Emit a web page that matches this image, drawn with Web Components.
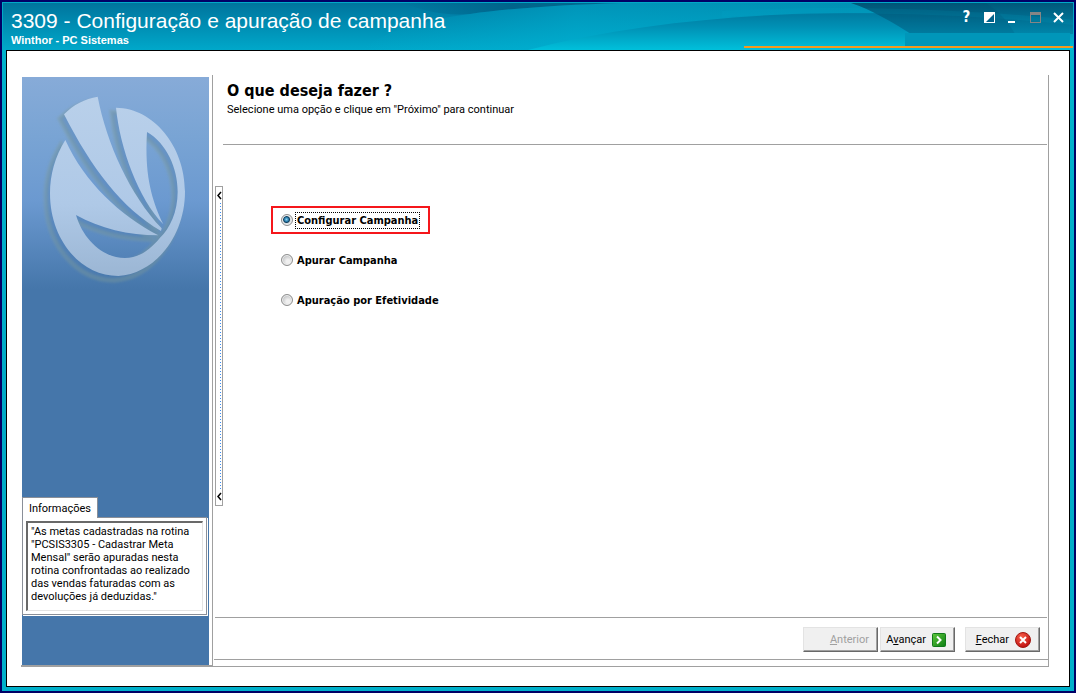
<!DOCTYPE html>
<html lang="pt-BR">
<head>
<meta charset="UTF-8">
<meta name="viewport" content="width=device-width, initial-scale=1">
<title>3309 - Configuração e apuração de campanha</title>
<style>
  body {
    margin: 0;
    font-family: Roboto, "DejaVu Sans Condensed", sans-serif;
    font-size: 11px;
    color: #000;
  }
</style>
</head>
<body>
<app-window>
  <span slot="title">3309 - Configuração e apuração de campanha</span>
  <span slot="subtitle">Winthor - PC Sistemas</span>
  <wizard-frame>
    <wizard-sidebar slot="sidebar">
      <brand-logo></brand-logo>
      <info-panel slot="info"></info-panel>
    </wizard-sidebar>
    <panel-splitter slot="splitter"></panel-splitter>
    <span slot="heading">O que deseja fazer ?</span>
    <span slot="hint">Selecione uma opção e clique em "Próximo" para continuar</span>
    <campaign-options></campaign-options>
    <wizard-actions slot="actions"></wizard-actions>
  </wizard-frame>
</app-window>

<script>
class AppWindow extends HTMLElement {
  constructor() {
    super();
    this.attachShadow({ mode: "open" });
  }

  connectedCallback() {
    this.shadowRoot.innerHTML = `
      <style>
        :host {
          display: flex;
          flex-direction: column;
          box-sizing: border-box;
          min-height: 100vh;
          border: 2px solid #000066;
          background: linear-gradient(#00b4ce, #00a9c6 60%, #00b0cb);
        }

        header {
          position: relative;
          display: flex;
          justify-content: space-between;
          height: 48px;
          font-family: "Liberation Sans", Arial, sans-serif;
          color: #fff;
        }

        .backdrop {
          position: absolute;
          inset: 0;
          width: 100%;
          height: 100%;
        }

        .titles {
          position: relative;
          padding: 7px 0 0 9px;
        }

        h1 {
          margin: 0;
          font-size: 21px;
          line-height: 24px;
          font-weight: normal;
        }

        p {
          margin: 0;
          font-size: 11px;
          line-height: 14px;
          font-weight: bold;
        }

        nav {
          position: relative;
          display: flex;
          height: 30px;
          padding-right: 4px;
        }

        nav button {
          display: flex;
          align-items: center;
          justify-content: center;
          width: 23px;
          padding: 0;
          border: none;
          background: none;
          color: #fff;
          font: bold 15px/30px "DejaVu Sans Condensed", sans-serif;
        }

        main {
          display: flex;
          flex: 1;
          margin: 0 4px 4px;
          padding: 24px 20px 19px 14px;
          border: 1px solid #000;
          background: #fff;
        }

        ::slotted(wizard-frame) {
          flex: 1;
        }
      </style>

      <header>
        <svg class="backdrop" viewBox="0 0 1072 48" preserveAspectRatio="none" aria-hidden="true">
          <defs>
            <linearGradient id="base" x1="0" y1="0" x2="0" y2="1">
              <stop offset="0" stop-color="#00739c"/>
              <stop offset="1" stop-color="#00a8ca"/>
            </linearGradient>
            <linearGradient id="shade" x1="0" y1="0" x2="1" y2="0">
              <stop offset="0" stop-color="#006288" stop-opacity="0"/>
              <stop offset=".5" stop-color="#006288" stop-opacity=".9"/>
              <stop offset="1" stop-color="#006288" stop-opacity=".6"/>
            </linearGradient>
            <linearGradient id="wave" x1="0" y1="0" x2="1" y2="0">
              <stop offset="0" stop-color="#00b4d4" stop-opacity="0"/>
              <stop offset=".3" stop-color="#00b4d4" stop-opacity=".5"/>
              <stop offset="1" stop-color="#00a4c4" stop-opacity=".5"/>
            </linearGradient>
            <linearGradient id="low" x1="0" y1="0" x2="0" y2="1">
              <stop offset="0" stop-color="#007aa0"/>
              <stop offset=".4" stop-color="#0092b6"/>
              <stop offset="1" stop-color="#00c0db"/>
            </linearGradient>
            <linearGradient id="dark" x1="0" y1="0" x2="0" y2="1">
              <stop offset="0" stop-color="#00587a"/>
              <stop offset="1" stop-color="#0086aa"/>
            </linearGradient>
          </defs>
          <rect width="1072" height="48" fill="url(#base)"/>
          <path d="M400 1H620C560 3 510 6 468 12C440 14 420 8 400 1Z" fill="url(#shade)"/>
          <path d="M360 48C380 30 420 18 468 12C510 6 560 3 620 1H1072V48Z" fill="url(#wave)"/>
          <path d="M526 48C610 26 700 16 790 12C900 9 1000 13 1072 22V48Z" fill="url(#low)"/>
          <path d="M849 1C870 8 890 20 909 32H1072V1Z" fill="url(#dark)"/>
          <path d="M720 9C820 3 960 6 1072 18V23C960 11 850 9 720 15Z" fill="#00a9c8" opacity=".15"/>
          <path d="M984 1C998 10 1008 22 1013 32H909C890 20 870 8 849 1Z" fill="#004463" opacity=".15"/>
          <rect x="903" y="31" width="165" height="14" fill="#0096b9"/>
          <rect x="742" y="44" width="330" height="2" fill="#f39a1e"/>
          <path d="M0 0H1072V1H0Z" fill="#00a9c8"/>
          <path d="M0 0H1V48H0ZM1071 0H1072V48H1071Z" fill="#00a9c8"/>
        </svg>
        <div class="titles">
          <h1><slot name="title"></slot></h1>
          <p><slot name="subtitle"></slot></p>
        </div>
        <nav>
          <button aria-label="Ajuda">?</button>
          <button aria-label="Alternar tamanho">
            <svg width="11" height="11"><path d="M0 0H11V11H0Z" fill="#fff"/><path d="M10 2V10H2Z" fill="#00618a"/></svg>
          </button>
          <button aria-label="Minimizar">
            <svg width="11" height="11"><path d="M1 9H8V11H1Z" fill="#fff"/></svg>
          </button>
          <button aria-label="Maximizar" disabled>
            <svg width="11" height="11"><path d="M0 0H11V11H0ZM1 3V10H10V3Z" fill="#858585" fill-rule="evenodd"/></svg>
          </button>
          <button aria-label="Fechar janela">
            <svg width="11" height="11"><path d="M1 1L10 10M10 1L1 10" stroke="#fff" stroke-width="2"/></svg>
          </button>
        </nav>
      </header>
      <main><slot></slot></main>
    `;
  }
}

class WizardFrame extends HTMLElement {
  constructor() {
    super();
    this.attachShadow({ mode: "open" });
  }

  connectedCallback() {
    this.shadowRoot.innerHTML = `
      <style>
        :host {
          display: grid;
          grid-template-columns: 192px 1fr;
          border-right: 1px solid #a0a0a0;
          border-bottom: 1px solid #a0a0a0;
        }

        .page {
          display: flex;
          flex-direction: column;
          padding: 0 0 6px 1px;
        }

        .body {
          display: grid;
          grid-template-columns: 8px 1fr;
          flex: 1;
          margin: 0 1px;
          border-bottom: 1px solid #a0a0a0;
        }

        ::slotted(panel-splitter) {
          align-self: center;
          height: 59%;
        }

        .intro {
          box-sizing: border-box;
          height: 70px;
          padding: 6px 0 0 4px;
          border-bottom: 1px solid #a0a0a0;
        }

        h2 {
          margin: 0;
          font-family: "DejaVu Sans Condensed", sans-serif;
          font-size: 16px;
          line-height: 20px;
        }

        p {
          margin: 0;
          font-size: 11px;
          line-height: 18px;
        }

        .options {
          padding: 61px 0 0 48px;
        }

        footer {
          padding: 9px 8px 7px 0;
          border-bottom: 1px solid #a0a0a0;
        }
      </style>

      <slot name="sidebar"></slot>
      <div class="page">
        <div class="body">
          <slot name="splitter"></slot>
          <section>
            <div class="intro">
              <h2><slot name="heading"></slot></h2>
              <p><slot name="hint"></slot></p>
            </div>
            <div class="options"><slot></slot></div>
          </section>
        </div>
        <footer><slot name="actions"></slot></footer>
      </div>
    `;
  }
}

class WizardSidebar extends HTMLElement {
  constructor() {
    super();
    this.attachShadow({ mode: "open" });
  }

  connectedCallback() {
    this.shadowRoot.innerHTML = `
      <style>
        :host {
          display: flex;
          padding: 2px 3px 0 1px;
          border-right: 1px solid #a0a0a0;
          border-bottom: 1px solid #a0a0a0;
        }

        .panel {
          display: flex;
          flex: 1;
          flex-direction: column;
          justify-content: space-between;
          padding-bottom: 50px;
          background: linear-gradient(#87abd8, #79a4d4 60px, #6b99d0 125px, #4576aa 212px);
        }
      </style>

      <div class="panel">
        <slot></slot>
        <slot name="info"></slot>
      </div>
    `;
  }
}

class BrandLogo extends HTMLElement {
  constructor() {
    super();
    this.attachShadow({ mode: "open" });
  }

  connectedCallback() {
    this.shadowRoot.innerHTML = `
      <style>
        :host {
          display: block;
        }

        svg {
          display: block;
          width: 100%;
        }
      </style>

      <svg viewBox="36 36 561 654" role="img" aria-label="PC Sistemas">
        <defs>
          <linearGradient id="face" x1="0" y1="95" x2="0" y2="633" gradientUnits="userSpaceOnUse">
            <stop offset="0" stop-color="#b9d0ea"/>
            <stop offset=".6" stop-color="#afc9e7"/>
            <stop offset="1" stop-color="#9bb6d4"/>
          </linearGradient>
          <filter id="soft"><feGaussianBlur stdDeviation="3"/></filter>
          <g id="mark">
            <path d="M162 148C190 119 225 101 263 95C290 235 360 390 455 490L453 498C335 430 245 310 162 148Z"/>
            <path d="M166 225C135 275 120 330 120 385C120 525 212 633 325 633C438 626 525 510 525 380C525 243 430 129 318 128C330 250 385 400 460 478C425 405 403 330 411 201C470 235 503 310 503 380C503 440 480 490 450 518C420 555 385 579 345 579C280 579 220 525 198 450C270 490 355 511 445 511C330 450 225 355 166 225Z"/>
          </g>
        </defs>
        <g filter="url(#soft)">
          <use href="#mark" x="-13" y="13" fill="#4777ad" fill-opacity=".35" stroke="#7d9c9a" stroke-opacity=".4" stroke-width="14"/>
        </g>
        <use href="#mark" fill="url(#face)"/>
      </svg>
    `;
  }
}

class InfoPanel extends HTMLElement {
  constructor() {
    super();
    this.attachShadow({ mode: "open" });
  }

  connectedCallback() {
    this.shadowRoot.innerHTML = `
      <style>
        :host {
          display: block;
        }

        button {
          position: relative;
          display: block;
          box-sizing: border-box;
          width: 76px;
          height: 21px;
          margin-bottom: -1px;
          padding: 0;
          border: 1px solid #8a8f98;
          border-bottom: none;
          background: #fff;
          color: #000;
          font: inherit;
        }

        .box {
          padding: 3px;
          margin-right: 2px;
          border: 1px solid #8a8f98;
          background: #fff;
          box-shadow: 1px 1px #fff;
        }

        textarea {
          display: block;
          box-sizing: border-box;
          width: 100%;
          height: 90px;
          padding: 2px 3px;
          border: 2px solid #696969;
          border-right: 1px solid #e3e3e3;
          border-bottom: 1px solid #e3e3e3;
          border-radius: 0;
          resize: none;
          overflow: hidden;
          outline: none;
          background: #fff;
          color: #000;
          font: inherit;
          line-height: 13px;
        }
      </style>

      <button role="tab" aria-selected="true" id="tab">Informações</button>
      <div class="box" role="tabpanel" aria-labelledby="tab">
        <textarea readonly aria-label="Informações">"As metas cadastradas na rotina
"PCSIS3305 - Cadastrar Meta
Mensal" serão apuradas nesta
rotina confrontadas ao realizado
das vendas faturadas com as
devoluções já deduzidas."</textarea>
      </div>
    `;
  }
}

class PanelSplitter extends HTMLElement {
  constructor() {
    super();
    this.attachShadow({ mode: "open" });
  }

  connectedCallback() {
    this.shadowRoot.innerHTML = `
      <style>
        :host {
          display: flex;
          flex-direction: column;
          align-items: center;
          box-sizing: border-box;
          width: 8px;
          padding: 4px 0;
          border: 1px solid #a0a0a0;
          background: #fff;
        }

        svg {
          flex: none;
          width: 6px;
          height: 9px;
        }

        .grip {
          flex: 1;
          width: 1px;
          margin: 3px 0 3px 2px;
          background: repeating-linear-gradient(#3c8cf0 0 1px, #fff 1px 3px);
        }
      </style>

      <svg viewBox="0 0 6 9" aria-hidden="true"><path d="M5 1L2 4.500L5 8" fill="none" stroke="#000" stroke-width="1.500"/></svg>
      <div class="grip"></div>
      <svg viewBox="0 0 6 9" aria-hidden="true"><path d="M5 1L2 4.500L5 8" fill="none" stroke="#000" stroke-width="1.500"/></svg>
    `;
  }
}

class CampaignOptions extends HTMLElement {
  constructor() {
    super();
    this.attachShadow({ mode: "open" });
    this.options = [
      { id: "configurar", label: "Configurar Campanha" },
      { id: "apurar", label: "Apurar Campanha" },
      { id: "efetividade", label: "Apuração por Efetividade" },
    ];
  }

  connectedCallback() {
    this.render();
  }

  render() {
    this.shadowRoot.innerHTML = `
      <style>
        :host {
          display: flex;
          flex-direction: column;
          align-items: flex-start;
          gap: 12px;
        }

        .option {
          display: flex;
          align-items: center;
          box-sizing: border-box;
          height: 28px;
          padding: 0 9px 0 8px;
          border: 2px solid transparent;
        }

        .option.marked {
          border-color: #f5161b;
        }

        input {
          appearance: none;
          box-sizing: border-box;
          width: 12px;
          height: 12px;
          margin: 0 3px 0 0;
          border: 1px solid #8e8f8f;
          border-radius: 50%;
          background: radial-gradient(circle at 60% 65%, #f0f0f0 20%, #bcbec0 75%);
          box-shadow: inset 0 0 0 1px #f0f0f0;
        }

        input:checked {
          background: radial-gradient(circle at 45% 45%, #8fd4f0 0, #2a7fae 2px, #0f3d5c 3px, #d5dce0 4px);
        }

        label {
          padding: 0 1px;
          font-family: "DejaVu Sans Condensed", sans-serif;
          font-weight: bold;
          line-height: 15px;
        }

        .marked label {
          outline: 1px dotted #000;
        }
      </style>
      ${this.options
        .map(
          (option, index) => `
        <div class="option ${index === 0 ? "marked" : ""}">
          <input type="radio" name="acao" id="${option.id}" ${index === 0 ? "checked" : ""}>
          <label for="${option.id}">${option.label}</label>
        </div>`
        )
        .join("")}
    `;
  }
}

class WizardActions extends HTMLElement {
  constructor() {
    super();
    this.attachShadow({ mode: "open" });
  }

  connectedCallback() {
    this.shadowRoot.innerHTML = `
      <style>
        :host {
          display: flex;
          justify-content: flex-end;
          gap: 2px;
        }

        button {
          display: flex;
          align-items: center;
          justify-content: flex-end;
          gap: 6px;
          box-sizing: border-box;
          width: 75px;
          height: 25px;
          padding: 0 8px 0 0;
          border: 1px solid #e3e3e3;
          border-right-color: #696969;
          border-bottom-color: #696969;
          background: #f0f0f0;
          box-shadow: inset -1px -1px #a0a0a0;
          color: #000;
          font: inherit;
        }

        button:disabled {
          color: #a0a0a0;
        }

        .close {
          margin-left: 8px;
        }
      </style>

      <button disabled><span><u>A</u>nterior</span></button>
      <button>
        <span>A<u>v</u>ançar</span>
        <svg width="14" height="14" viewBox="0 0 14 14" aria-hidden="true">
          <defs>
            <linearGradient id="green" x1="0" y1="0" x2="1" y2="1">
              <stop offset="0" stop-color="#5fc83c"/>
              <stop offset="1" stop-color="#0b7d12"/>
            </linearGradient>
          </defs>
          <rect x=".5" y=".5" width="13" height="13" rx="1" fill="url(#green)" stroke="#11791a"/>
          <path d="M5 3.500L8.500 7L5 10.500" fill="none" stroke="#fff" stroke-width="2"/>
        </svg>
      </button>
      <button class="close">
        <span><u>F</u>echar</span>
        <svg width="16" height="16" viewBox="0 0 16 16" aria-hidden="true">
          <defs>
            <radialGradient id="red" cx=".4" cy=".3" r=".7">
              <stop offset="0" stop-color="#f8604a"/>
              <stop offset="1" stop-color="#c01010"/>
            </radialGradient>
          </defs>
          <circle cx="8" cy="8" r="7.500" fill="url(#red)" stroke="#a01812"/>
          <path d="M5 5L11 11M11 5L5 11" stroke="#fff" stroke-width="2"/>
        </svg>
      </button>
    `;
  }
}

customElements.define("app-window", AppWindow);
customElements.define("wizard-frame", WizardFrame);
customElements.define("wizard-sidebar", WizardSidebar);
customElements.define("brand-logo", BrandLogo);
customElements.define("info-panel", InfoPanel);
customElements.define("panel-splitter", PanelSplitter);
customElements.define("campaign-options", CampaignOptions);
customElements.define("wizard-actions", WizardActions);
</script>
</body>
</html>
